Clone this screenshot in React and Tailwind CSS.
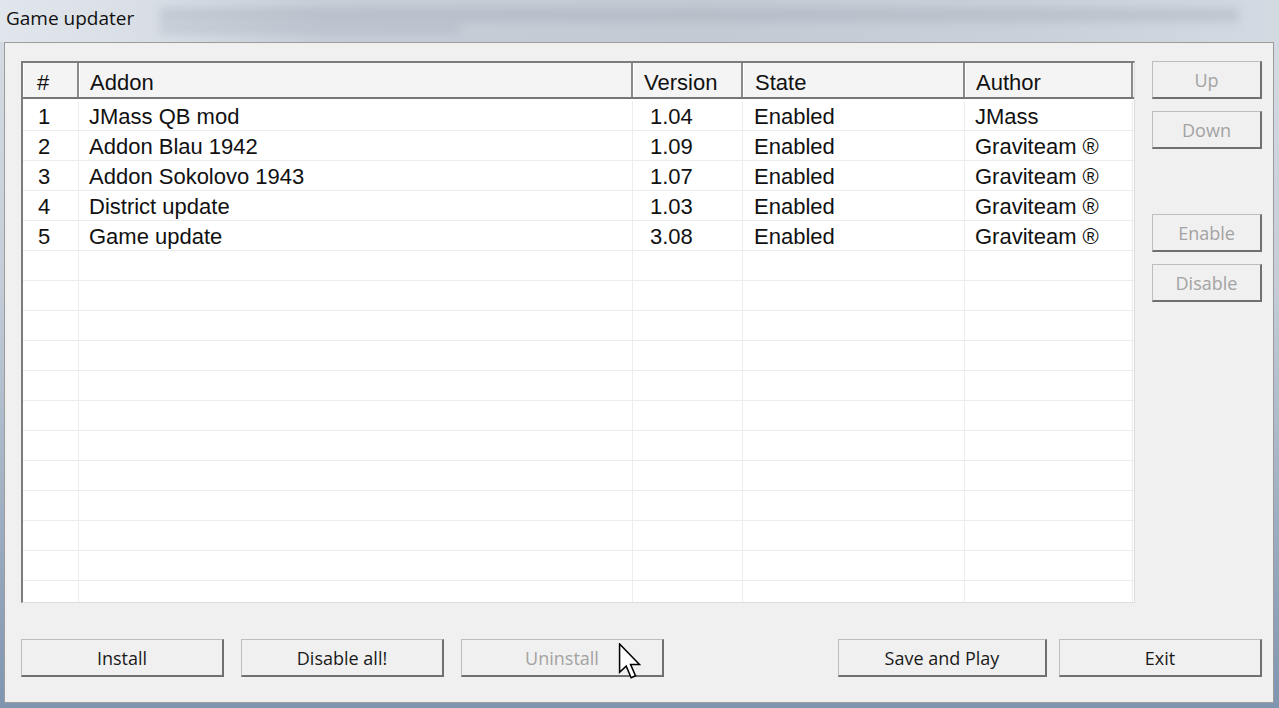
import React from "react";

const rows = [
  { n: "1", addon: "JMass QB mod", version: "1.04", state: "Enabled", author: "JMass" },
  { n: "2", addon: "Addon Blau 1942", version: "1.09", state: "Enabled", author: "Graviteam ®" },
  { n: "3", addon: "Addon Sokolovo 1943", version: "1.07", state: "Enabled", author: "Graviteam ®" },
  { n: "4", addon: "District update", version: "1.03", state: "Enabled", author: "Graviteam ®" },
  { n: "5", addon: "Game update", version: "3.08", state: "Enabled", author: "Graviteam ®" },
];

// widths of the columns, in px
const cols = [
  { key: "n", title: "#", w: "w-[56px]", pad: "pl-[13px]", padBody: "pl-[15px]" },
  { key: "addon", title: "Addon", w: "w-[554px]", pad: "pl-[10px]", padBody: "pl-[10px]" },
  { key: "version", title: "Version", w: "w-[110px]", pad: "pl-[10px]", padBody: "pl-[17px]" },
  { key: "state", title: "State", w: "w-[222px]", pad: "pl-[11px]", padBody: "pl-[11px]" },
  { key: "author", title: "Author", w: "w-[168px]", pad: "pl-[10px]", padBody: "pl-[10px]" },
];

const EMPTY_ROWS = 13;

function WinButton({ children, disabled, className = "", extra }) {
  return (
    <div
      className={
        "relative flex h-[38px] items-center justify-center pt-[2px] bg-[#f0f0f0] border-t border-l border-r-2 border-b-2 border-t-[#bdbdbd] border-l-[#bdbdbd] border-r-[#707070] border-b-[#707070] text-[18px] " +
        (disabled ? "text-[#a3a3a3] " : "text-[#1a1a1a] ") +
        className
      }
      style={{ fontFamily: '"Open Sans", "Noto Sans", sans-serif' }}
    >
      {children}
      {extra}
    </div>
  );
}

function Cursor() {
  return (
    <svg
      className="absolute left-[156px] top-[3px]"
      width="24"
      height="36"
      viewBox="0 0 12 19"
    >
      <path
        d="M0.5 0.5 L0.5 15.5 L4 12.2 L6.6 18.3 L8.9 17.3 L6.3 11.3 L11 11.3 Z"
        fill="#ffffff"
        stroke="#000000"
        strokeWidth="0.8"
        strokeLinejoin="miter"
      />
    </svg>
  );
}

export default function App() {
  return (
    <div className="flex h-[708px] w-[1279px] flex-col overflow-hidden bg-[linear-gradient(180deg,#d7dde4_0%,#c4cdd8_40%,#7f95b0_100%)]">
      {/* title bar */}
      <div className="relative flex h-[42px] shrink-0 items-center overflow-hidden bg-[linear-gradient(90deg,#e1e6ec_0%,#d8dee5_12%,#c6ced8_25%,#c2cad4_55%,#c8d0d9_80%,#d4dae2_100%)]">
        <div className="absolute left-[160px] right-[40px] top-[8px] h-[14px] bg-[#a3abb6] opacity-40 blur-[5px]" />
        <div className="absolute left-[160px] w-[300px] top-[24px] h-[10px] bg-[#a7afba] opacity-40 blur-[5px]" />
        <span
          className="relative pl-[6px] pb-[5px] text-[19px] text-[#111]"
          style={{ fontFamily: '"Open Sans", "Noto Sans", sans-serif' }}
        >
          Game updater
        </span>
      </div>

      {/* client area */}
      <div className="mx-[4px] flex h-[661px] w-[1270px] flex-col border border-[#9c9c9c] bg-[#f0f0f0] pl-[16px] pr-[10px] pt-[18px]">
        <div className="flex">
          {/* list view */}
          <div
            className="flex h-[542px] w-[1114px] flex-col overflow-hidden border-t-2 border-l-2 border-r border-b border-t-[#7c7c7c] border-l-[#7c7c7c] border-r-[#dedede] border-b-[#dedede] bg-white text-[22px] text-[#111]"
            style={{ fontFamily: '"Liberation Sans", Arial, sans-serif' }}
          >
            <div className="flex h-[36px] shrink-0 border-b-2 border-[#767676] bg-[#f4f4f4]">
              {cols.map((c) => (
                <div
                  key={c.key}
                  className={c.w + " " + c.pad + " flex items-center pt-[5px] border-l border-r-2 border-l-white border-r-[#8a8a8a] leading-none"}
                >
                  {c.title}
                </div>
              ))}
            </div>
            <div className="mt-[2px] flex flex-col">
              {rows.map((r) => (
                <div key={r.n} className="flex h-[30px] shrink-0 border-b border-[#ececec]">
                  {cols.map((c) => (
                    <div
                      key={c.key}
                      className={c.w + " " + c.padBody + " flex items-center pt-[3px] border-r border-[#ececec] leading-none"}
                    >
                      {r[c.key]}
                    </div>
                  ))}
                </div>
              ))}
              {Array.from({ length: EMPTY_ROWS }).map((_, i) => (
                <div key={i} className="flex h-[30px] shrink-0 border-b border-[#ececec]">
                  {cols.map((c) => (
                    <div key={c.key} className={c.w + " border-r border-[#ececec]"} />
                  ))}
                </div>
              ))}
            </div>
          </div>

          {/* side buttons */}
          <div className="ml-[17px] flex w-[110px] flex-col">
            <WinButton disabled>Up</WinButton>
            <WinButton disabled className="mt-[12px]">
              Down
            </WinButton>
            <WinButton disabled className="mt-[65px]">
              Enable
            </WinButton>
            <WinButton disabled className="mt-[12px]">
              Disable
            </WinButton>
          </div>
        </div>

        {/* bottom buttons */}
        <div className="mt-[36px] flex">
          <WinButton className="w-[203px]">Install</WinButton>
          <WinButton className="ml-[17px] w-[203px]">Disable all!</WinButton>
          <WinButton disabled className="ml-[17px] w-[203px]" extra={<Cursor />}>
            Uninstall
          </WinButton>
          <WinButton className="ml-[174px] w-[209px]">Save and Play</WinButton>
          <WinButton className="ml-[12px] w-[203px]">Exit</WinButton>
        </div>
      </div>
    </div>
  );
}
